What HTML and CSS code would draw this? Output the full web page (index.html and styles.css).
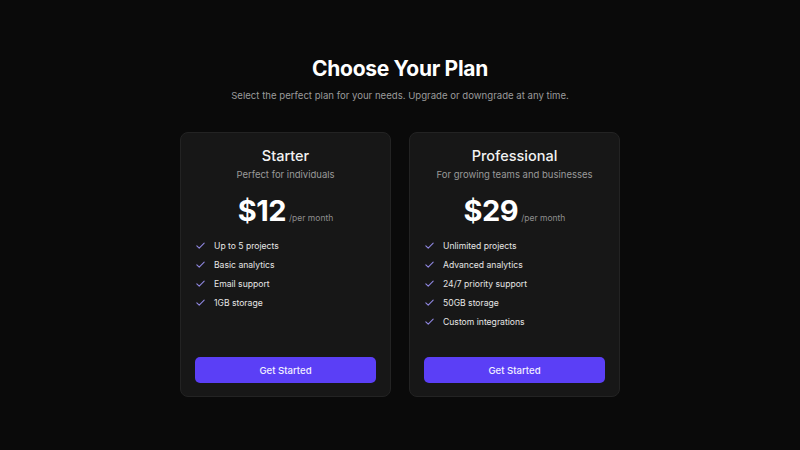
FILE: index.html
```html
<!DOCTYPE html>
<html lang="en">
<head>
<meta charset="utf-8">
<title>Choose Your Plan</title>
<link rel="stylesheet" href="styles.css">
</head>
<body>
<main class="page">
  <h1 class="title">Choose Your Plan</h1>
  <p class="subtitle">Select the perfect plan for your needs. Upgrade or downgrade at any time.</p>
  <div class="plans">
    <section class="card">
      <h2 class="plan-name">Starter</h2>
      <p class="plan-desc">Perfect for individuals</p>
      <div class="price"><span class="amount">$12</span><span class="period">/per month</span></div>
      <ul class="features">
        <li><svg class="check" viewBox="0 0 12 12"><path d="M2 6.3l2.6 2.6L10 3.4"/></svg>Up to 5 projects</li>
        <li><svg class="check" viewBox="0 0 12 12"><path d="M2 6.3l2.6 2.6L10 3.4"/></svg>Basic analytics</li>
        <li><svg class="check" viewBox="0 0 12 12"><path d="M2 6.3l2.6 2.6L10 3.4"/></svg>Email support</li>
        <li><svg class="check" viewBox="0 0 12 12"><path d="M2 6.3l2.6 2.6L10 3.4"/></svg>1GB storage</li>
      </ul>
      <button class="btn">Get Started</button>
    </section>
    <section class="card">
      <h2 class="plan-name">Professional</h2>
      <p class="plan-desc">For growing teams and businesses</p>
      <div class="price"><span class="amount">$29</span><span class="period">/per month</span></div>
      <ul class="features">
        <li><svg class="check" viewBox="0 0 12 12"><path d="M2 6.3l2.6 2.6L10 3.4"/></svg>Unlimited projects</li>
        <li><svg class="check" viewBox="0 0 12 12"><path d="M2 6.3l2.6 2.6L10 3.4"/></svg>Advanced analytics</li>
        <li><svg class="check" viewBox="0 0 12 12"><path d="M2 6.3l2.6 2.6L10 3.4"/></svg>24/7 priority support</li>
        <li><svg class="check" viewBox="0 0 12 12"><path d="M2 6.3l2.6 2.6L10 3.4"/></svg>50GB storage</li>
        <li><svg class="check" viewBox="0 0 12 12"><path d="M2 6.3l2.6 2.6L10 3.4"/></svg>Custom integrations</li>
      </ul>
      <button class="btn">Get Started</button>
    </section>
  </div>
</main>
</body>
</html>
```
FILE: styles.css
```css
* { box-sizing: border-box; }
html, body {
  margin: 0;
  padding: 0;
  background: #0a0a0a;
  font-family: Inter, "Noto Sans", sans-serif;
  color: #f5f5f5;
}
.page {
  width: 800px;
  height: 450px;
  padding-top: 55px;
  display: flex;
  flex-direction: column;
  align-items: center;
}
.title {
  margin: 0;
  font-size: 21px;
  line-height: 28px;
  font-weight: 700;
  letter-spacing: -0.3px;
  color: #ffffff;
}
.subtitle {
  margin: 6px 0 0;
  font-size: 9.6px;
  line-height: 14px;
  color: #9a9a9a;
}
.plans {
  margin-top: 29px;
  display: flex;
  gap: 18px;
  align-items: stretch;
}
.card {
  width: 211px;
  background: #171717;
  border: 1px solid #232323;
  border-radius: 8px;
  padding: 13px 14px 13px;
  display: flex;
  flex-direction: column;
  align-items: center;
}
.plan-name {
  margin: 0;
  font-size: 14.5px;
  line-height: 20px;
  font-weight: 500;
  color: #f2f2f2;
}
.plan-desc {
  margin: 2px 0 0;
  font-size: 9.5px;
  line-height: 14px;
  color: #9a9a9a;
}
.price {
  margin-top: 9px;
  display: flex;
  align-items: baseline;
  gap: 3px;
  height: 40px;
}
.amount {
  font-size: 29px;
  line-height: 40px;
  font-weight: 700;
  color: #ffffff;
  letter-spacing: -0.5px;
}
.period {
  font-size: 8.5px;
  color: #8e8e8e;
}
.features {
  list-style: none;
  margin: 5px 0 0;
  padding: 0;
  align-self: stretch;
}
.features li {
  display: flex;
  align-items: center;
  height: 19px;
  font-size: 8.6px;
  color: #e6e6e6;
}
.check {
  width: 11px;
  height: 11px;
  margin-right: 8px;
  fill: none;
  stroke: #8f86e0;
  stroke-width: 1.2;
  stroke-linecap: round;
  stroke-linejoin: round;
}
.btn {
  margin-top: auto;
  align-self: stretch;
  height: 26px;
  border: none;
  border-radius: 5px;
  background: #5b3ff6;
  color: #f2f0ff;
  font-family: Inter, "Noto Sans", sans-serif;
  font-size: 9.6px;
  font-weight: 500;
}
.card:last-child .features { margin-bottom: 26px; }
```
